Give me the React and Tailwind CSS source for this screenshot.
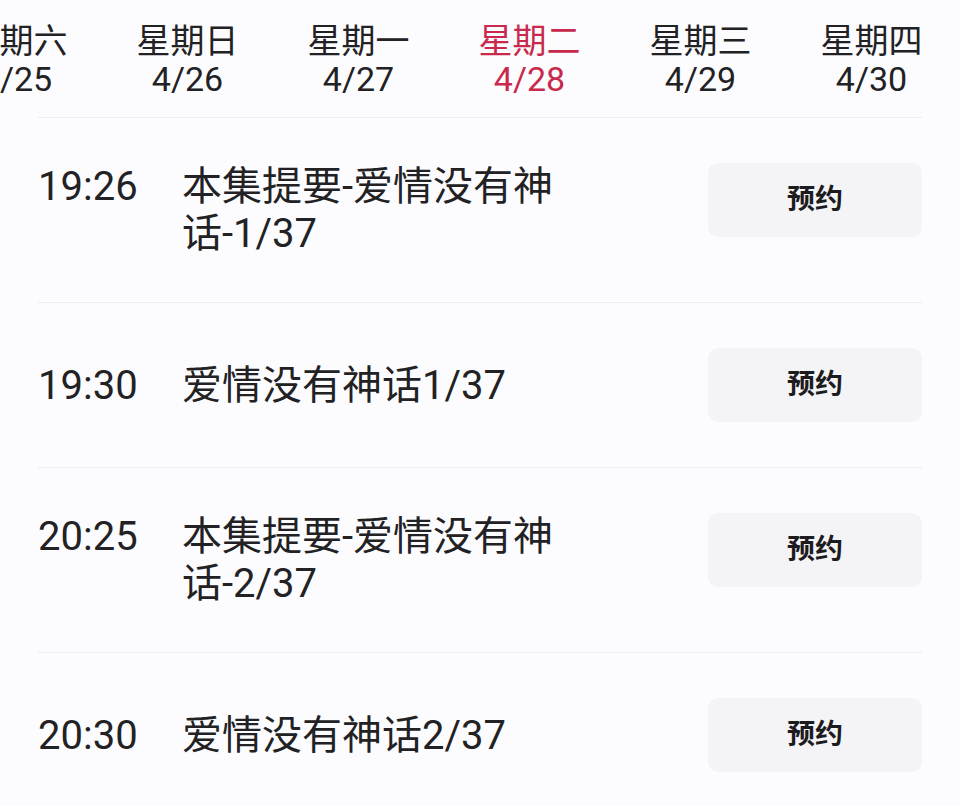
import React from 'react'

const days = [
    { label: '星期六', date: '4/25' },
    { label: '星期日', date: '4/26' },
    { label: '星期一', date: '4/27' },
    { label: '星期二', date: '4/28', active: true },
    { label: '星期三', date: '4/29' },
    { label: '星期四', date: '4/30' },
    { label: '星期五', date: '5/1' },
]

const programs = [
    { time: '19:26', title: '本集提要-爱情没有神话-1/37' },
    { time: '19:30', title: '爱情没有神话1/37' },
    { time: '20:25', title: '本集提要-爱情没有神话-2/37' },
    { time: '20:30', title: '爱情没有神话2/37' },
]

const App = () => {
    return (
        <div
            className="w-[960px] h-[806px] overflow-hidden bg-[#fcfcfe] text-[#222224]"
            style={{ fontFamily: 'Roboto, "Noto Sans CJK SC", sans-serif' }}
        >
            {/* Day tabs (scrolled, first one partly off-screen) */}
            <div className="flex -ml-[69px] pt-[22px] pb-[19px]">
                {days.map(d => (
                    <div
                        key={d.date}
                        className={`w-[171px] shrink-0 text-center text-[34px] leading-[38px] ${d.active ? 'text-[#c8294c]' : 'text-[#222224]'}`}
                    >
                        <div>{d.label}</div>
                        <div>{d.date}</div>
                    </div>
                ))}
            </div>

            {/* Program list */}
            <div className="px-[38px]">
                {programs.map(p => (
                    <div key={p.time} className="flex items-start justify-between border-t border-[#eceef2] py-[45px]">
                        <div className="min-h-[74px] flex items-center">
                            <div className="flex items-start text-[40px] leading-[47px]">
                                <div className="w-[144px] shrink-0">{p.time}</div>
                                <div className="w-[400px]">{p.title}</div>
                            </div>
                        </div>
                        <button className="w-[214px] h-[74px] shrink-0 rounded-[10px] bg-[#f4f4f7] text-[28px] font-bold text-[#1c1c1e]">
                            预约
                        </button>
                    </div>
                ))}
            </div>
        </div>
    )
}

export default App
